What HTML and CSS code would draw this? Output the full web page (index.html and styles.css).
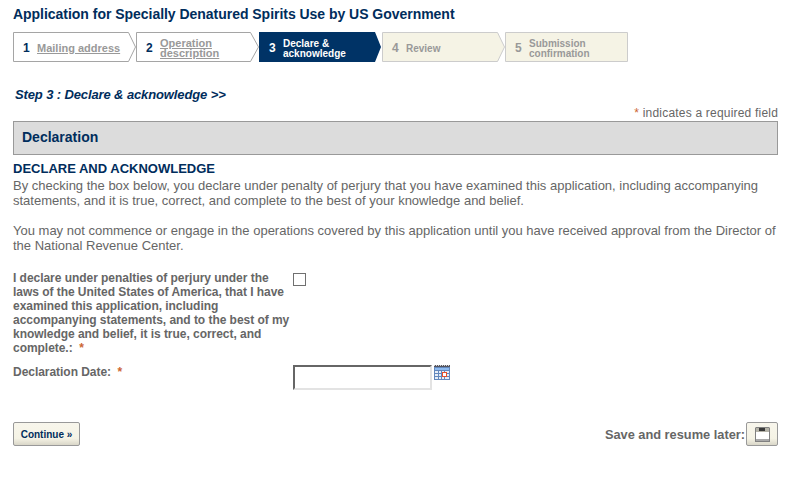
FILE: index.html
```html
<!DOCTYPE html>
<html lang="en">

<head>
    <meta charset="UTF-8">
    <title>Application for Specially Denatured Spirits Use by US Government</title>
    <link rel="stylesheet" href="styles.css">
</head>

<body>
    <div class="page">
        <h1 class="app-title">Application for Specially Denatured Spirits Use by US Government</h1>

        <!-- steps -->
        <div class="steps">
            <div class="step step-done">
                <svg class="step-bg" width="123" height="30"><path d="M.5.5H115.5L122.5 15L115.5 29.500H.5Z" fill="#fff" stroke="#a5a5a5"/></svg>
                <span class="step-num">1</span>
                <a href="#" class="step-text">Mailing address</a>
            </div>
            <div class="step step-done">
                <svg class="step-bg" width="123" height="30"><path d="M.5.5H114.500L122.500 15L114.500 29.500H.5Z" fill="#fff" stroke="#a5a5a5"/></svg>
                <span class="step-num">2</span>
                <a href="#" class="step-text">Operation description</a>
            </div>
            <div class="step step-current">
                <svg class="step-bg" width="123" height="30"><path d="M0 0H116L122 15L116 30H0Z" fill="#003366"/></svg>
                <span class="step-num">3</span>
                <span class="step-text">Declare &amp; acknowledge</span>
            </div>
            <div class="step step-todo">
                <svg class="step-bg" width="123" height="30"><path d="M.5.5H115.500L122.500 15L115.500 29.500H.5Z" fill="#f5f3e5" stroke="#cccccc"/></svg>
                <span class="step-num">4</span>
                <span class="step-text">Review</span>
            </div>
            <div class="step step-todo">
                <svg class="step-bg" width="123" height="30"><path d="M.5.5H122.500V29.500H.5Z" fill="#f5f3e5" stroke="#cccccc"/></svg>
                <span class="step-num">5</span>
                <span class="step-text">Submission confirmation</span>
            </div>
        </div>

        <h2 class="step-title">Step 3 : Declare &amp; acknowledge &gt;&gt;</h2>

        <p class="required-note"><span class="star">*</span> indicates a required field</p>

        <div class="section-bar">Declaration</div>

        <h3 class="declare-head">DECLARE AND ACKNOWLEDGE</h3>
        <p class="declare-text">By checking the box below, you declare under penalty of perjury that you have examined this application, including accompanying statements, and it is true, correct, and complete to the best of your knowledge and belief.</p>
        <p class="declare-text">You may not commence or engage in the operations covered by this application until you have received approval from the Director of the National Revenue Center.</p>

        <div class="form-row row-check">
            <label class="form-label" for="agree">I declare under penalties of perjury under the laws of the United States of America, that I have examined this application, including accompanying statements, and to the best of my knowledge and belief, it is true, correct, and complete.: &nbsp;<span class="star">*</span></label>
            <input type="checkbox" id="agree" class="check">
        </div>
        <div class="form-row row-date">
            <label class="form-label" for="date">Declaration Date: &nbsp;<span class="star">*</span></label>
            <input type="text" id="date" class="date-input">
            <svg class="cal-icon" width="16" height="15" viewBox="0 0 16 15">
                <rect x="0" y="0" width="16" height="2" fill="#55555f"/>
                <path d="M0 0h1v1H0zM2 0h1v1H2zM4 0h1v1H4zM6 0h1v1H6zM8 0h1v1H8zM10 0h1v1h-1zM12 0h1v1h-1zM14 0h1v1h-1z" fill="#d8d8d8"/>
                <rect x="0" y="2" width="16" height="13" fill="#6388bd"/>
                <rect x="1" y="3" width="14" height="2" fill="#8dbaf0"/>
                <path d="M1 6h3v2H1zM5 6h2v2H5zM8 6h2v2H8zM11 6h4v2h-4zM1 9h3v2H1zM5 9h2v2H5zM11 9h4v2h-4zM1 12h3v2H1zM5 12h2v2H5zM8 12h2v2H8zM11 12h4v2h-4z" fill="#e6edf7"/>
                <rect x="8.500" y="7.500" width="4" height="4" fill="#fff" stroke="#e8502a"/>
            </svg>
        </div>

        <div class="actions">
            <button type="button" class="btn btn-continue">Continue &raquo;</button>
            <div class="save-later">
                <span>Save and resume later:</span>
                <button type="button" class="btn btn-save" aria-label="Save">
                    <svg width="15" height="15" viewBox="0 0 15 15">
                        <path d="M1 0H14L15 1V15H0V1Z" fill="#808080"/>
                        <rect x="1" y="1" width="13" height="4" fill="#b5b3a8"/>
                        <rect x="4" y="1" width="6" height="3" fill="#3a3a3a"/>
                        <rect x="1" y="5" width="13" height="7" fill="#fff"/>
                        <rect x="1" y="12" width="13" height="2" fill="#a8a8a8"/>
                    </svg>
                </button>
            </div>
        </div>
    </div>
</body>

</html>
```

FILE: styles.css
```css
* {
    margin: 0;
    padding: 0;
    box-sizing: border-box;
}

body {
    font-family: "Liberation Sans", Arial, sans-serif;
    font-size: 12px;
    color: #666666;
    background-color: #ffffff;
}

.page {
    width: 765px;
    margin-left: 13px;
    padding-top: 6px;
}

.app-title {
    font-size: 14px;
    line-height: 16px;
    font-weight: bold;
    color: #002d5c;
    letter-spacing: -.03px;
}

.steps {
    display: flex;
    margin-top: 10px;
}

.step {
    position: relative;
    display: flex;
    align-items: center;
    width: 123px;
    height: 30px;
    padding: 1px 0 0 10px;
    font-weight: bold;
}

.step-bg {
    position: absolute;
    left: 0;
    top: 0;
}

.step-num {
    position: relative;
    width: 14px;
    flex: none;
    font-size: 12px;
}

.step-text {
    position: relative;
    width: 86px;
    font-size: 11px;
    line-height: 10px;
}

.step-done .step-num {
    color: #002d5c;
}

.step-done .step-text {
    color: #999999;
}

.step-current .step-num,
.step-current .step-text {
    color: #ffffff;
}

.step-current .step-text {
    top: 1px;
    font-size: 10px;
}

.step-todo .step-num {
    color: #999999;
}

.step-todo .step-text {
    top: 1px;
    color: #999999;
    font-size: 10px;
}

.step-title {
    margin-top: 25px;
    margin-left: 2px;
    font-size: 13px;
    line-height: 16px;
    font-weight: bold;
    font-style: italic;
    color: #002d5c;
    letter-spacing: -.12px;
}

.required-note {
    margin-top: 3px;
    text-align: right;
    line-height: 14px;
    font-size: 12px;
    letter-spacing: .2px;
}

.star {
    color: #cc6633;
}

.section-bar {
    height: 34px;
    margin-top: 1px;
    padding-left: 8px;
    border: 1px solid #999999;
    background-color: #dcdcdc;
    font-size: 14px;
    line-height: 30px;
    font-weight: bold;
    color: #002d5c;
}

.declare-head {
    margin-top: 6px;
    margin-bottom: 2px;
    font-size: 13px;
    line-height: 15px;
    font-weight: bold;
    color: #002d5c;
}

.declare-text {
    font-size: 13px;
    line-height: 15px;
    margin-bottom: 15px;
}

.form-row {
    display: flex;
    align-items: flex-start;
}

.form-label {
    width: 280px;
    flex: none;
    font-weight: bold;
    line-height: 14px;
    letter-spacing: -.04px;
}

.row-check {
    margin-top: 18px;
}

.check {
    appearance: none;
    width: 13px;
    height: 13px;
    margin-top: 2px;
    border: 1px solid #707070;
    background-color: #fff;
}

.row-date {
    margin-top: 10px;
}

.date-input {
    width: 139px;
    height: 25px;
    border-style: solid;
    border-width: 2px;
    border-color: #666666 #e3e3e3 #e3e3e3 #666666;
    background-color: #fff;
}

.cal-icon {
    margin-left: 2px;
}

.actions {
    display: flex;
    justify-content: space-between;
    align-items: center;
    margin-top: 32px;
}

.save-later {
    display: flex;
    align-items: center;
    font-size: 12.8px;
    font-weight: bold;
    gap: 1px;
}

.btn {
    height: 24px;
    border: 1px solid #999999;
    border-radius: 2px;
    background: linear-gradient(#f8f6ec, #f5f3e5 70%, #d9d6c8);
    font-family: "Liberation Sans", Arial, sans-serif;
    font-weight: bold;
    font-size: 10px;
    color: #002d5c;
}

.btn-continue {
    width: 67px;
}

.btn-save {
    display: flex;
    align-items: center;
    justify-content: center;
    width: 32px;
}
```
